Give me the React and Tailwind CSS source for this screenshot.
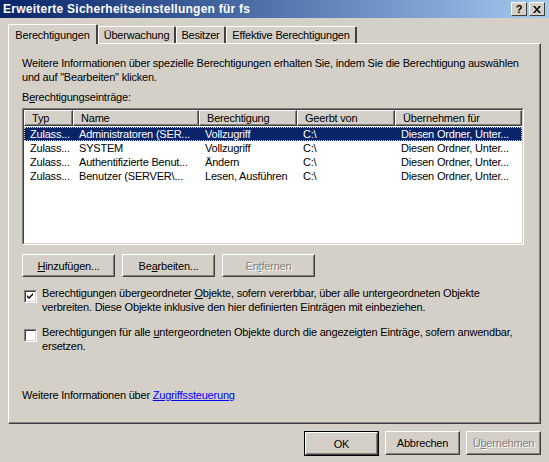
import React from "react";

const rows = [
  ["Zulass...", "Administratoren (SER...", "Vollzugriff", "C:\\", "Diesen Ordner, Unter..."],
  ["Zulass...", "SYSTEM", "Vollzugriff", "C:\\", "Diesen Ordner, Unter..."],
  ["Zulass...", "Authentifizierte Benut...", "Ändern", "C:\\", "Diesen Ordner, Unter..."],
  ["Zulass...", "Benutzer (SERVER\\...", "Lesen, Ausführen", "C:\\", "Diesen Ordner, Unter..."],
];

const cols = [
  { label: "Typ", w: "w-[49px]" },
  { label: "Name", w: "w-[126px]" },
  { label: "Berechtigung", w: "w-[98px]" },
  { label: "Geerbt von", w: "w-[98px]" },
  { label: "Übernehmen für", w: "w-[127px]" },
];

// raised 3d button, classic look
function Button({ children, className = "", disabled, isDefault }) {
  const inner = (
    <div className="h-full border border-t-white border-l-white border-r-[#404040] border-b-[#404040]">
      <div className="h-full flex items-center justify-center border border-t-[#d4d0c8] border-l-[#d4d0c8] border-r-[#808080] border-b-[#808080]">
        <span className={disabled ? "text-[#808080] [text-shadow:1px_1px_0_#ffffff]" : "text-black"}>{children}</span>
      </div>
    </div>
  );
  if (isDefault) {
    return <div className={"border border-black " + className}>{inner}</div>;
  }
  return <div className={className}>{inner}</div>;
}

function Checkbox({ checked }) {
  return (
    <div className="w-[13px] h-[13px] shrink-0 mt-[4px] border border-t-[#808080] border-l-[#808080] border-r-white border-b-white">
      <div className="w-full h-full bg-white border border-t-[#404040] border-l-[#404040] border-r-[#d4d0c8] border-b-[#d4d0c8] flex items-center justify-center">
        {checked && (
          <svg width="7" height="7" viewBox="0 0 7 7">
            <path d="M0 2 L2 4 L6 0 L6 2 L2 6 L0 4 Z" fill="#000" />
          </svg>
        )}
      </div>
    </div>
  );
}

function Tab({ children, active, w }) {
  if (active) {
    return (
      <div className={w + " relative z-10 h-[20px] mb-[-1px] bg-[#d4d0c8] border-t border-l border-t-white border-l-white border-r-2 border-r-[#404040] rounded-tl-[2px] rounded-tr-[2px] flex items-center justify-center whitespace-nowrap"}>
        {children}
      </div>
    );
  }
  return (
    <div className={w + " h-[17px] bg-[#d4d0c8] border-t border-l border-t-white border-l-white border-r-2 border-r-[#404040] rounded-tl-[2px] rounded-tr-[2px] flex items-center justify-center whitespace-nowrap"}>
      {children}
    </div>
  );
}

export default function App() {
  return (
    <div className="w-[549px] h-[462px] bg-[#d4d0c8] overflow-hidden text-[11px] leading-[14px] tracking-[-0.2px] text-black font-['Liberation_Sans',Arial,sans-serif]">
      {/* title bar */}
      <div className="h-[18px] flex items-center justify-between pl-[3px] pr-[4px] bg-gradient-to-r from-[#0a246a] to-[#a6caf0]">
        <span className="text-white font-bold text-[12px] tracking-[0.25px]">Erweiterte Sicherheitseinstellungen für fs</span>
        <div className="flex gap-[2px]">
          <div className="w-[16px] h-[14px] bg-[#d4d0c8] border border-t-white border-l-white border-r-[#404040] border-b-[#404040] flex items-center justify-center">
            <span className="font-bold text-[11px] leading-none tracking-normal">?</span>
          </div>
          <div className="w-[16px] h-[14px] bg-[#d4d0c8] border border-t-white border-l-white border-r-[#404040] border-b-[#404040] flex items-center justify-center">
            <svg width="8" height="7" viewBox="0 0 8 7">
              <path d="M0 0 H2 L4 2.5 L6 0 H8 L5 3.5 L8 7 H6 L4 4.5 L2 7 H0 L3 3.5 Z" fill="#000" />
            </svg>
          </div>
        </div>
      </div>

      <div className="pl-[8px] pr-[8px]">
        {/* tabs */}
        <div className="flex items-end h-[19px] mt-[6px]">
          <Tab active w="w-[90px]">Berechtigungen</Tab>
          <Tab w="w-[78px]">Überwachung</Tab>
          <Tab w="w-[50px]">Besitzer</Tab>
          <Tab w="w-[131px]">Effektive Berechtigungen</Tab>
        </div>

        {/* tab panel */}
        <div className="h-[381px] w-[533px] border-t border-l border-t-white border-l-white border-r border-b border-r-[#404040] border-b-[#404040]">
          <div className="h-full whitespace-nowrap border-r border-b border-r-[#808080] border-b-[#808080] pl-[13px] pr-[10px] pt-[12px]">
            <p>
              Weitere Informationen über spezielle Berechtigungen erhalten Sie, indem Sie die Berechtigung auswählen
              <br />
              und auf "Bearbeiten" klicken.
            </p>
            <p className="mt-[6px]">
              B<u>e</u>rechtigungseinträge:
            </p>

            {/* list view */}
            <div className="mt-[4px] h-[137px] w-[502px] border border-t-[#808080] border-l-[#808080] border-r-white border-b-white">
              <div className="h-full bg-white border border-t-[#404040] border-l-[#404040] border-r-[#d4d0c8] border-b-[#d4d0c8]">
                <div className="flex h-[16px]">
                  {cols.map((c) => (
                    <div
                      key={c.label}
                      className={c.w + " shrink-0 bg-[#d4d0c8] border-t border-l border-t-white border-l-white border-r border-b border-r-[#404040] border-b-[#404040]"}
                    >
                      <div className="h-full border-r border-b border-r-[#808080] border-b-[#808080] pl-[7px] flex items-center">
                        {c.label}
                      </div>
                    </div>
                  ))}
                </div>
                <div className="pt-[1px]">
                  {rows.map((r, i) => (
                    <div
                      key={i}
                      className={
                        "flex h-[14px] items-center " +
                        (i === 0 ? "bg-[#0a246a] text-white outline-1 outline-dotted outline-offset-[-1px] outline-[#e8d890]" : "")
                      }
                    >
                      {r.map((cell, j) => (
                        <div key={j} className={cols[j].w + " shrink-0 pl-[6px] overflow-hidden"}>
                          {cell}
                        </div>
                      ))}
                    </div>
                  ))}
                </div>
              </div>
            </div>

            {/* action buttons */}
            <div className="flex gap-[7px] mt-[9px]">
              <Button className="w-[93px] h-[23px]">
                <u>H</u>inzufügen...
              </Button>
              <Button className="w-[93px] h-[23px]">
                Be<u>a</u>rbeiten...
              </Button>
              <Button className="w-[93px] h-[23px]" disabled>
                En<u>t</u>fernen
              </Button>
            </div>

            {/* checkboxes */}
            <div className="flex gap-[5px] mt-[9px] pl-[2px]">
              <Checkbox checked />
              <p>
                Berechtigungen übergeordneter <u>O</u>bjekte, sofern vererbbar, über alle untergeordneten Objekte
                <br />
                verbreiten. Diese Objekte inklusive den hier definierten Einträgen mit einbeziehen.
              </p>
            </div>
            <div className="flex gap-[5px] mt-[11px] pl-[2px]">
              <Checkbox />
              <p>
                Berechtigungen für alle <u>u</u>ntergeordneten Objekte durch die angezeigten Einträge, sofern anwendbar,
                <br />
                ersetzen.
              </p>
            </div>

            <p className="mt-[35px]">
              Weitere Informationen über <span className="text-[#0000ff] underline">Zugriffssteuerung</span>
            </p>
          </div>
        </div>

        {/* dialog buttons */}
        <div className="flex justify-end gap-[6px] mt-[7px] w-[533px]">
          <Button className="w-[75px] h-[25px]" isDefault>
            OK
          </Button>
          <Button className="w-[75px] h-[24px]">Abbrechen</Button>
          <Button className="w-[75px] h-[24px]" disabled>
            Ü<u>b</u>ernehmen
          </Button>
        </div>
      </div>
    </div>
  );
}
